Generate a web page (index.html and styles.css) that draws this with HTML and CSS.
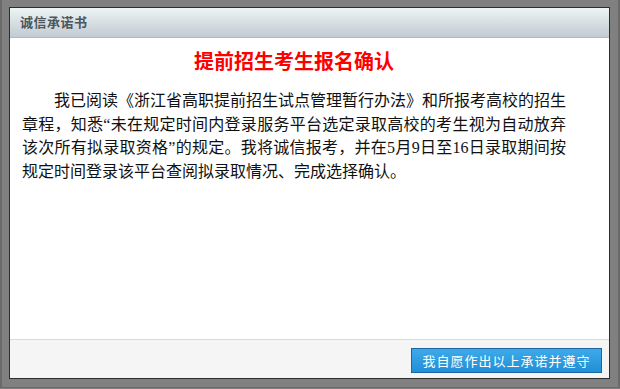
FILE: index.html
```html
<!DOCTYPE html>
<html lang="zh-CN">
<head>
    <meta charset="UTF-8">
    <meta name="viewport" content="width=device-width, initial-scale=1.0">
    <title>诚信承诺书</title>
    <link rel="stylesheet" href="styles.css">
</head>
<body>
    <div class="dialog">
        <div class="dialog-head">诚信承诺书</div>
        <div class="dialog-body">
            <h2 class="titulo">提前招生考生报名确认</h2>
            <p class="promesa">我已阅读《浙江省高职提前招生试点管理暂行办法》和所报考高校的招生章程，知悉“未在规定时间内登录服务平台选定录取高校的考生视为自动放弃该次所有拟录取资格”的规定。我将诚信报考，并在5月9日至16日录取期间按规定时间登录该平台查阅拟录取情况、完成选择确认。</p>
        </div>
        <div class="dialog-foot">
            <button type="button">我自愿作出以上承诺并遵守</button>
        </div>
    </div>
</body>
</html>
```

FILE: styles.css
```css
html {
    background-color: #808080;
}
body {
    margin: 0;
    height: 388px;
    border-left: 2px solid #6a6a6a;
    border-right: 2px solid #6a6a6a;
    border-bottom: 1px solid #6a6a6a;
    padding: 7px 8px 0 7px;
    box-sizing: border-box;
    font-family: "Liberation Serif", "Noto Sans CJK SC", serif;
}
.dialog {
    height: 372px;
    border: 1px solid #2e2e2e;
    background: white;
    display: flex;
    flex-direction: column;
    box-sizing: border-box;
}
.dialog-head {
    height: 29px;
    line-height: 28px;
    padding-left: 10px;
    background: linear-gradient(#ecf4f4, #c3cad1);
    border-bottom: 1px solid #b1b9c1;
    color: #4b565e;
    font-family: "Noto Sans CJK SC", sans-serif;
    font-size: 13px;
    font-weight: bold;
    letter-spacing: 0.5px;
}
.dialog-body {
    flex: 1;
    padding: 8px 43px 0 12px;
}
.titulo {
    margin: 0 0 13px;
    color: #ff0000;
    font-family: "Noto Sans CJK SC", sans-serif;
    font-size: 20px;
    line-height: 30px;
    text-align: center;
}
.promesa {
    margin: 0;
    color: #111;
    font-size: 16px;
    line-height: 23.5px;
    text-indent: 2em;
    text-align: justify;
}
.dialog-foot {
    height: 39px;
    border-top: 1px solid #d4dde5;
    background-color: #f5f5f5;
    display: flex;
    justify-content: flex-end;
    align-items: flex-start;
    padding: 8px 7px 0 0;
    box-sizing: border-box;
}
button {
    width: 191px;
    height: 25px;
    padding: 0;
    border: 1px solid #1b65a3;
    background: linear-gradient(#3eaaea, #218fd6);
    color: white;
    font-family: "Noto Sans CJK SC", sans-serif;
    font-size: 13px;
    letter-spacing: 1px;
    cursor: pointer;
}
```
